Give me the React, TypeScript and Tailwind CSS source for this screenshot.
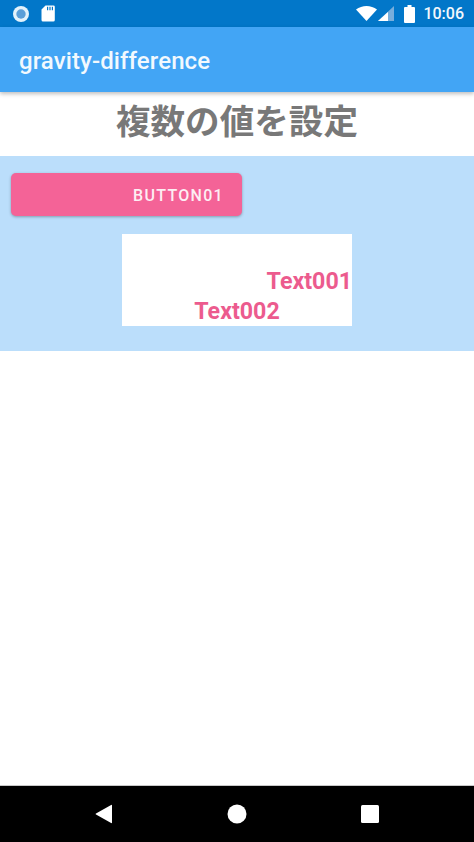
import React from "react";

export default function App() {
  return (
    <div className="w-[474px] h-[842px] flex flex-col bg-white overflow-hidden font-['Roboto',sans-serif]">
      <div className="h-[27px] bg-[#0277c9] flex items-center pl-[12px] pr-[10px] text-white shrink-0">
        <svg width="18" height="18" viewBox="0 0 18 18" className="mr-[11px]">
          <circle cx="9" cy="9" r="8" fill="#e3f2fb" />
          <circle cx="9" cy="9" r="4.7" fill="#5c9fd8" />
        </svg>
        <svg width="14" height="17" viewBox="0 0 14 17">
          <path d="M4.5 0.5H12.5a1.3 1.3 0 0 1 1.3 1.3V15a1.5 1.5 0 0 1-1.5 1.5H2A1.5 1.5 0 0 1 .5 15V4.5Z" fill="#fff" />
          <path d="M6 1.8h1.2v3.4H6ZM8.4 1.8h1.2v3.4H8.4ZM10.8 1.8H12v3.4h-1.2Z" fill="#0277c9" />
        </svg>
        <div className="flex-1" />
        <svg width="21" height="15" viewBox="0 0 21 15" className="mr-[1px]">
          <path d="M0 3.6C6-1.2 15-1.2 21 3.6L10.5 15Z" fill="#fff" />
        </svg>
        <svg width="16" height="15" viewBox="0 0 16 15" className="mr-[10px]">
          <path d="M16 0V15H0Z" fill="#78aedc" />
          <path d="M10 6V15H0Z" fill="#fff" />
        </svg>
        <svg width="11" height="18" viewBox="0 0 11 18" className="mr-[8px]">
          <path d="M3.5 0h4v2H10a1 1 0 0 1 1 1v14a1 1 0 0 1-1 1H1a1 1 0 0 1-1-1V3a1 1 0 0 1 1-1h2.500Z" fill="#fff" />
        </svg>
        <span className="text-[16px] font-medium leading-none text-[#f2f8fc]">10:06</span>
      </div>

      <div className="h-[65px] bg-[#42a5f5] flex items-center pl-[19px] shrink-0 shadow-[0_2px_4px_rgba(0,0,0,0.25)] relative">
        <span className="text-[24px] font-medium text-[#f2f9fe] leading-none mt-[2px] tracking-[0.1px]">gravity-difference</span>
      </div>

      <div className="h-[64px] flex items-center justify-center shrink-0">
        <span className="text-[34.600px] font-bold text-[#787878] leading-none mb-[10px] font-['Noto_Sans_CJK_JP',sans-serif]">複数の値を設定</span>
      </div>

      <div className="h-[195px] bg-[#bbdefb] shrink-0 flex flex-col">
        <div className="ml-[11px] mt-[17px] w-[231px] h-[43px] rounded-[5px] bg-[#f46397] shadow-[0_1px_3px_rgba(0,0,0,0.3)] flex items-center justify-end pr-[18px]">
          <span className="text-[16px] font-medium tracking-[1.3px] text-[#fdeef3] leading-none mt-[3px]">BUTTON01</span>
        </div>
        <div className="ml-[122px] mt-[18px] w-[230px] h-[92px] bg-white flex flex-col justify-end text-[23.200px] font-bold text-[#ec5b8e] leading-[30px] pb-0">
          <span className="self-end">Text001</span>
          <span className="self-center">Text002</span>
        </div>
      </div>

      <div className="flex-1" />

      <div className="h-[56px] bg-black shrink-0 flex items-center justify-between pl-[95px] pr-[95px] shadow-[0_-1px_0_#c8c8c8]">
        <svg width="18" height="20" viewBox="0 0 18 20">
          <path d="M17 1.500V18.500a.6.6 0 0 1-.9.5L1 10.600a.7.7 0 0 1 0-1.200L16.100 1a.6.6 0 0 1 .9.5Z" fill="#fff" />
        </svg>
        <svg width="20" height="20" viewBox="0 0 20 20">
          <circle cx="10" cy="10" r="9.500" fill="#fff" />
        </svg>
        <svg width="18" height="18" viewBox="0 0 18 18">
          <rect width="18" height="18" rx="1.500" fill="#fff" />
        </svg>
      </div>
    </div>
  );
}
